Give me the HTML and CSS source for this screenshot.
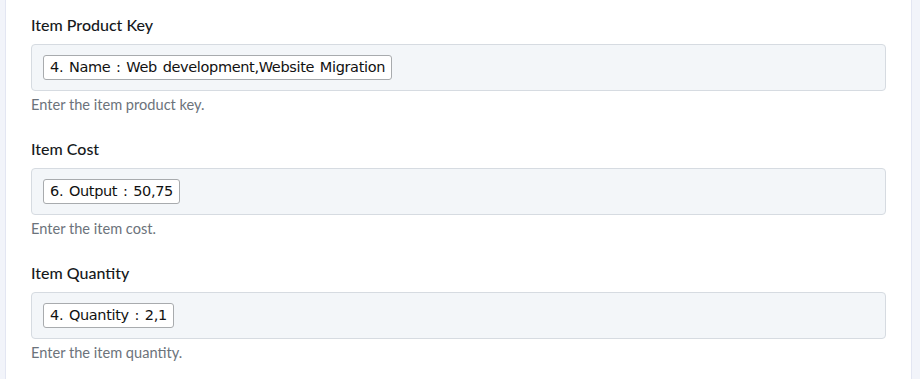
FILE: index.html
```html
<!DOCTYPE html>
<html lang="en">
<head>
    <meta charset="UTF-8">
    <meta name="viewport" content="width=device-width, initial-scale=1.0">
    <title>Item Fields</title>
    <link rel="stylesheet" href="styles.css">
</head>
<body>
    <div class="card">
        <div class="field">
            <label class="field-label">Item Product Key</label>
            <div class="field-box">
                <span class="chip">4. Name : Web development,Website Migration</span>
            </div>
            <p class="field-help">Enter the item product key.</p>
        </div>
        <div class="field">
            <label class="field-label">Item Cost</label>
            <div class="field-box">
                <span class="chip">6. Output : 50,75</span>
            </div>
            <p class="field-help">Enter the item cost.</p>
        </div>
        <div class="field">
            <label class="field-label">Item Quantity</label>
            <div class="field-box">
                <span class="chip">4. Quantity : 2,1</span>
            </div>
            <p class="field-help">Enter the item quantity.</p>
        </div>
    </div>
</body>
</html>
```

FILE: styles.css
```css
body {
    margin: 0;
    padding: 0;
    background-color: #f2f4fa;
    font-family: 'Lato', 'Open Sans', sans-serif;
    overflow: hidden;
}
.card {
    margin: 0 8px 0 5px;
    padding: 15px 25px 40px 25px;
    background-color: #fff;
    border-left: 1px solid #e3e6f2;
    border-right: 1px solid #e3e6f2;
    min-height: 400px;
}
.field {
    margin-bottom: 24px;
}
.field-label {
    display: block;
    font-size: 16px;
    line-height: 20px;
    font-weight: 500;
    color: #16191c;
    margin-bottom: 9px;
}
.field-box {
    background-color: #f3f6f9;
    border: 1px solid #d6dbe1;
    border-radius: 4px;
    padding: 10px 11px;
    height: 25px;
}
.chip {
    display: inline-block;
    height: 23px;
    line-height: 23px;
    padding: 0 6px;
    background-color: #fff;
    border: 1px solid #a8abae;
    border-radius: 3px;
    font-family: 'DejaVu Sans', Verdana, sans-serif;
    font-size: 14.5px;
    letter-spacing: -0.35px;
    word-spacing: 1.5px;
    color: #111;
    white-space: nowrap;
}
.field-help {
    margin: 4px 0 0 0;
    font-size: 14.6px;
    line-height: 20px;
    color: #6c737b;
}
```
